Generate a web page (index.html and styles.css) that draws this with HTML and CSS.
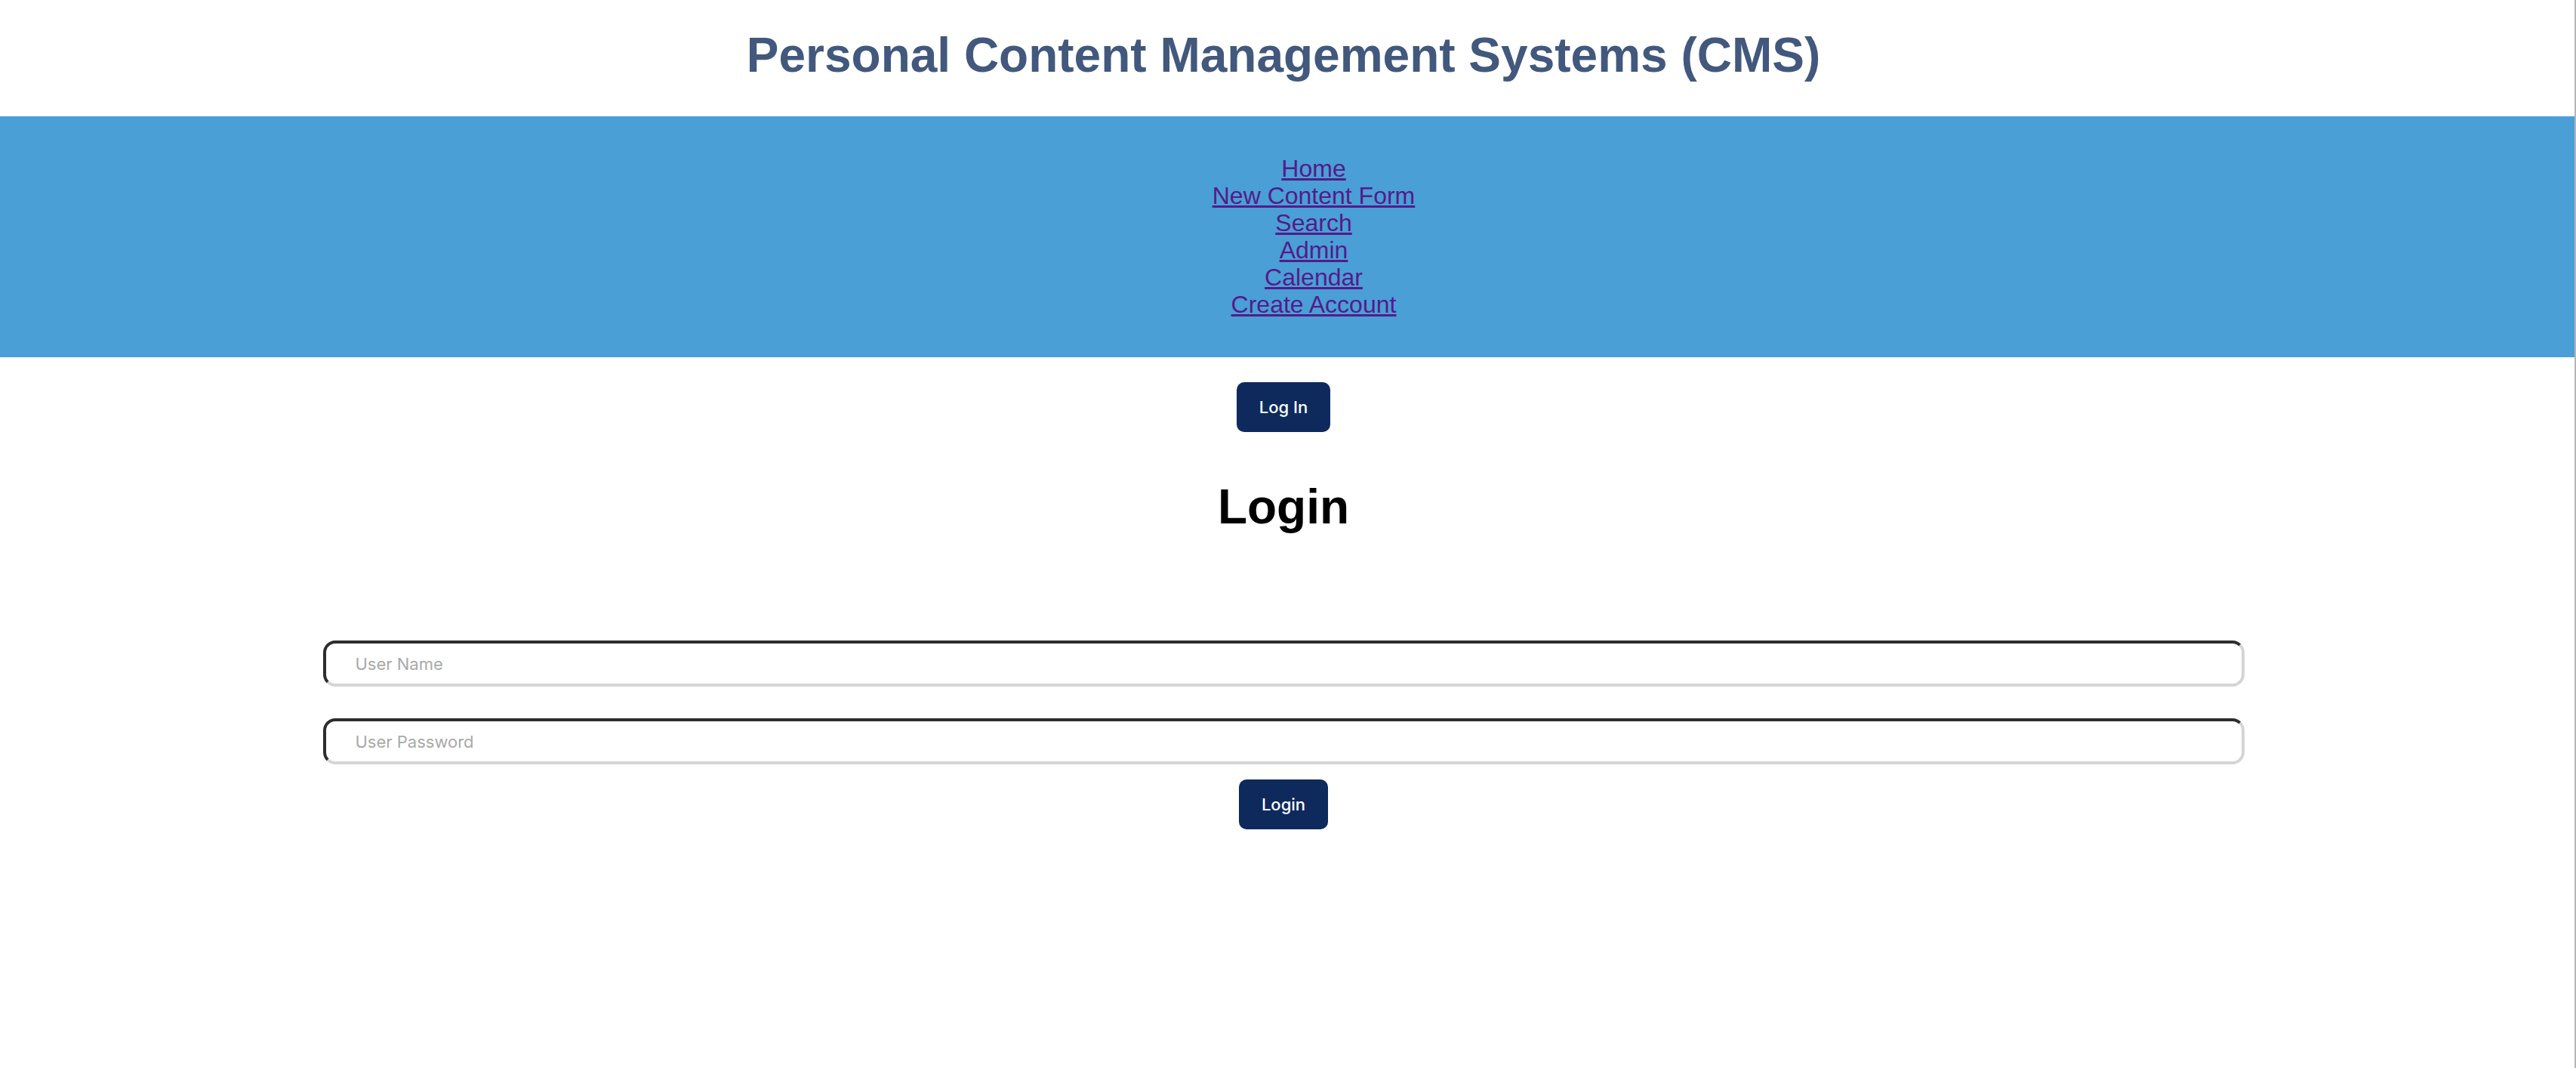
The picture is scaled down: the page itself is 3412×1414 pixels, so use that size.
FILE: index.html
```html
<!DOCTYPE html>
<html lang="en">
<head>
<meta charset="utf-8">
<title>Personal Content Management Systems (CMS)</title>
<link rel="stylesheet" href="styles.css">
</head>
<body>
<header class="site-header">
  <h1 class="site-title">Personal Content Management Systems (CMS)</h1>
</header>
<nav class="site-nav">
  <ul class="nav-list">
    <li><a class="nav-link" href="#">Home</a></li>
    <li><a class="nav-link" href="#">New Content Form</a></li>
    <li><a class="nav-link" href="#">Search</a></li>
    <li><a class="nav-link" href="#">Admin</a></li>
    <li><a class="nav-link" href="#">Calendar</a></li>
    <li><a class="nav-link" href="#">Create Account</a></li>
  </ul>
</nav>
<main class="main">
  <div class="auth-bar">
    <button class="btn btn-login" type="button">Log In</button>
  </div>
  <h1 class="page-title">Login</h1>
  <form class="login-form">
    <input class="field" type="text" placeholder="User Name">
    <input class="field field-second" type="password" placeholder="User Password">
    <button class="btn btn-submit" type="button">Login</button>
  </form>
</main>
</body>
</html>
```
FILE: styles.css
```css
html, body {
  background: #ffffff;
}
body {
  margin: 0;
  min-height: 1414px;
  box-sizing: border-box;
  border-right: 2px solid #b4b4b4;
  font-family: "Liberation Sans", Arial, sans-serif;
}
.site-header {
  height: 154px;
  box-sizing: border-box;
  padding: 36px 10px 0 0;
  display: flex;
  justify-content: center;
}
.site-title {
  margin: 0;
  font-size: 64px;
  line-height: 74px;
  font-weight: 700;
  color: #42587d;
}
.site-nav {
  background: #499fd6;
  padding: 51px 10px 52px 0;
}
.nav-list {
  list-style: none;
  margin: 0;
  padding: 0 0 0 80px;
  text-align: center;
  font-size: 32px;
  line-height: 36px;
}
.nav-link {
  color: #551a8b;
  text-decoration: underline;
}
.main {
  padding-right: 10px;
}
.auth-bar {
  display: flex;
  justify-content: center;
  padding-top: 33px;
}
.btn {
  height: 66px;
  padding: 0 30px;
  border: 0;
  border-radius: 10px;
  background: #0e2a5d;
  color: #ffffff;
  font-family: Inter, "Noto Sans", sans-serif;
  font-size: 22px;
  font-weight: 500;
}
.page-title {
  margin: 62px 0 0;
  text-align: center;
  font-size: 64px;
  line-height: 74px;
  font-weight: 700;
  color: #000000;
}
.login-form {
  margin-top: 140px;
  display: flex;
  flex-direction: column;
  align-items: center;
}
.field {
  width: 2545px;
  height: 61px;
  box-sizing: border-box;
  border: 4px solid;
  border-color: #2d2d2d #d5d5d5 #d5d5d5 #2d2d2d;
  border-radius: 16px;
  padding: 0 39px;
  font-family: Inter, "Noto Sans", sans-serif;
  font-size: 22px;
  color: #222222;
  background: #ffffff;
  outline: none;
}
.field::placeholder {
  color: #a9a9a9;
}
.field-second {
  margin-top: 42px;
}
.btn-submit {
  margin-top: 20px;
}
```
